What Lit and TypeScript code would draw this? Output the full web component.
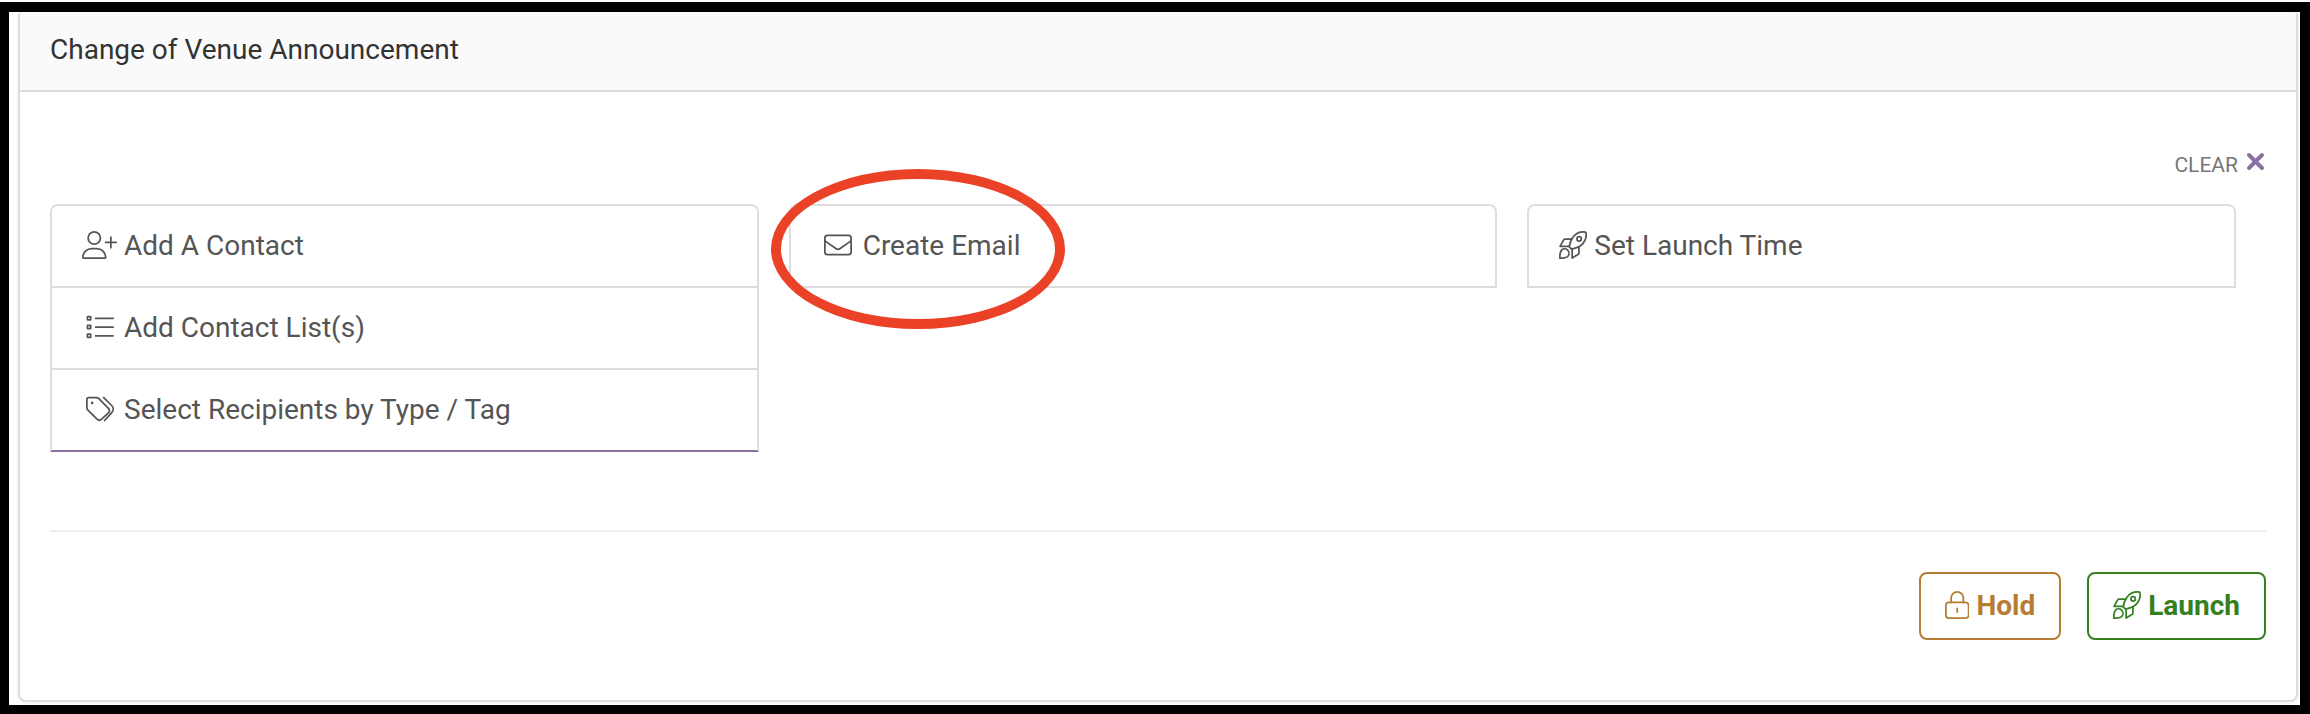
import { LitElement, html, css, svg, TemplateResult } from "lit";
import { customElement, property } from "lit/decorators.js";

interface Glyph {
  width: number;
  shape: TemplateResult;
}

const glyphs: Record<string, Glyph> = {
  "user-plus": {
    width: 640,
    shape: svg`<circle cx="224" cy="128" r="112"/>
      <path d="M16 482.3C16 392.7 88.7 320 178.3 320h91.4C359.3 320 432 392.7 432 482.3c0 7.6-6.1 13.7-13.7 13.7H29.7C22.1 496 16 489.9 16 482.3z"/>
      <path d="M432 208H624M528 112V304"/>`,
  },
  list: {
    width: 512,
    shape: svg`<rect x="26" y="66" width="60" height="60" rx="8"/>
      <rect x="26" y="226" width="60" height="60" rx="8"/>
      <rect x="26" y="386" width="60" height="60" rx="8"/>
      <path d="M176 96H496M176 256H496M176 416H496"/>`,
  },
  tags: {
    width: 512,
    shape: svg`<path d="M16 80v149.5c0 17 6.7 33.3 18.7 45.3l168 168c25 25 57.500 25 82.500 0L410.700 325.300c25-25 25-57.500 0-82.500l-176-176C222.700 54.700 206.500 48 189.500 48H48C30.300 48 16 62.300 16 80z"/>
      <path d="M324 46L470 192C505 228 505 285 470 321L340 466"/>
      <circle class="dot" cx="112" cy="144" r="24"/>`,
  },
  envelope: {
    width: 512,
    shape: svg`<rect x="16" y="80" width="480" height="352" rx="48"/>
      <path d="M16 180L223 325c20 14 46 14 66 0L496 180"/>`,
  },
  rocket: {
    width: 512,
    shape: svg`<path d="M186 286C200 215 225 150 262 106C312 42 375 16 440 16C456 16 472 17 484 20Q491 22 493 30C504 90 490 170 440 226C395 280 320 315 228 330Z"/>
      <path d="M230 148H112C98 148 88 154 82 166L20 280H186"/>
      <path d="M364 288V400C364 414 358 424 346 430L240 494V330"/>
      <path d="M16 496C14 420 20 375 48 348C78 322 130 322 158 350C188 380 190 432 162 462C130 492 80 494 16 496Z"/>
      <circle cx="368" cy="144" r="40"/>`,
  },
  lock: {
    width: 448,
    shape: svg`<rect x="16" y="208" width="416" height="288" rx="56"/>
      <path d="M112 208V128a112 112 0 0 1 224 0v80M224 316v72"/>`,
  },
};

@customElement("line-icon")
class LineIcon extends LitElement {
  static styles = css`
    :host {
      display: inline-flex;
      flex: none;
      justify-content: center;
      margin-bottom: 3px;
    }
    .glyph {
      display: block;
      height: 28px;
      fill: none;
      stroke: currentColor;
      stroke-width: 32;
      stroke-linecap: round;
      stroke-linejoin: round;
    }
    .dot {
      fill: currentColor;
      stroke: none;
    }
  `;
  @property() name = "list";

  render() {
    const glyph = glyphs[this.name];
    return html`<svg class="glyph" viewBox="0 0 ${glyph.width} 512" aria-hidden="true">${glyph.shape}</svg>`;
  }
}

interface Step {
  icon: string;
  label: string;
}

const columns: Step[][] = [
  [
    { icon: "user-plus", label: "Add A Contact" },
    { icon: "list", label: "Add Contact List(s)" },
    { icon: "tags", label: "Select Recipients by Type / Tag" },
  ],
  [{ icon: "envelope", label: "Create Email" }],
  [{ icon: "rocket", label: "Set Launch Time" }],
];

@customElement("app-root")
class AppRoot extends LitElement {
  static styles = css`
    :host {
      display: block;
      box-sizing: border-box;
      min-height: 100vh;
      padding-top: 2px;
      background: #fff;
      color: #555;
      font: 28px/42px Roboto, "Liberation Sans", sans-serif;
    }
    * {
      box-sizing: border-box;
    }
    button {
      margin: 0;
      font: inherit;
      color: inherit;
      background: #fff;
      cursor: pointer;
    }
    .frame {
      padding: 0 2px 3px 9px;
      border: solid #000;
      border-width: 10px 10px 9px 9px;
    }
    .panel {
      border: 2px solid #ddd;
      border-top: 0;
      border-radius: 4px 4px 8px 8px;
      box-shadow: 0 2px 4px rgba(0, 0, 0, 0.06);
    }
    .header {
      padding: 17px 30px 19px;
      border-bottom: 2px solid #ddd;
      border-radius: 4px 4px 0 0;
      background: #fafafa;
    }
    .title {
      margin: 0;
      font-size: 28px;
      font-weight: 400;
      color: #333;
    }
    .body {
      padding: 52px 30px 60px;
    }
    .toolbar {
      display: flex;
      justify-content: flex-end;
      margin-bottom: 18px;
    }
    .clear {
      display: flex;
      align-items: center;
      gap: 8px;
      height: 42px;
      padding: 0 1px;
      border: 0;
      font-size: 21px;
      color: #777;
    }
    .cross {
      width: 19px;
      height: 19px;
      margin-bottom: 8px;
      fill: none;
      stroke: #8e6fa2;
      stroke-width: 4;
      stroke-linecap: round;
    }
    .columns {
      display: grid;
      grid-template-columns: repeat(3, 1fr);
      align-items: start;
      gap: 30px;
      padding-right: 30px;
    }
    .column {
      position: relative;
      border: 2px solid #ddd;
      border-bottom: 0;
      border-radius: 8px 8px 0 0;
    }
    .step {
      display: flex;
      align-items: center;
      gap: 7px;
      width: 100%;
      padding: 19px 30px;
      border: 0;
      border-bottom: 2px solid #ddd;
      border-radius: 0;
      text-align: left;
    }
    .step:first-child {
      border-radius: 6px 6px 0 0;
    }
    .column.current {
      border-bottom: 2px solid #8e6fa2;
    }
    .column.current .step:last-child {
      border-bottom: 0;
    }
    .fixed {
      width: 35px;
    }
    .callout {
      position: absolute;
      top: -37px;
      left: -20px;
      width: 294px;
      height: 160px;
      border: 10px solid #ea4127;
      border-radius: 50%;
      pointer-events: none;
    }
    .rule {
      height: 2px;
      margin: 78px 0 40px;
      border: 0;
      background: #eee;
    }
    .actions {
      display: flex;
      justify-content: flex-end;
      gap: 26px;
    }
    .action {
      display: flex;
      align-items: center;
      gap: 7px;
      padding: 11px 24px;
      border: 2px solid currentColor;
      border-radius: 8px;
      font-weight: 700;
    }
    .hold {
      color: #b57d31;
    }
    .launch {
      color: #348021;
    }
  `;

  private renderStep(step: Step) {
    return html`<button class="step" type="button">
      <line-icon class=${step.icon === "rocket" ? "" : "fixed"} name=${step.icon}></line-icon>
      <span>${step.label}</span>
    </button>`;
  }

  render() {
    return html`<div class="frame">
      <main class="panel">
        <header class="header"><h1 class="title">Change of Venue Announcement</h1></header>
        <div class="body">
          <div class="toolbar">
            <button class="clear" type="button">
              <span>CLEAR</span>
              <svg class="cross" viewBox="0 0 19 19" aria-hidden="true"><path d="M3 3L16 16M16 3L3 16" /></svg>
            </button>
          </div>
          <div class="columns">
            ${columns.map(
              (steps, i) => html`<div class="column ${i === 0 ? "current" : ""}">
                ${steps.map((step) => this.renderStep(step))}
                ${i === 1 ? html`<span class="callout"></span>` : ""}
              </div>`
            )}
          </div>
          <hr class="rule" />
          <div class="actions">
            <button class="action hold" type="button"><line-icon name="lock"></line-icon><span>Hold</span></button>
            <button class="action launch" type="button"><line-icon name="rocket"></line-icon><span>Launch</span></button>
          </div>
        </div>
      </main>
    </div>`;
  }
}
